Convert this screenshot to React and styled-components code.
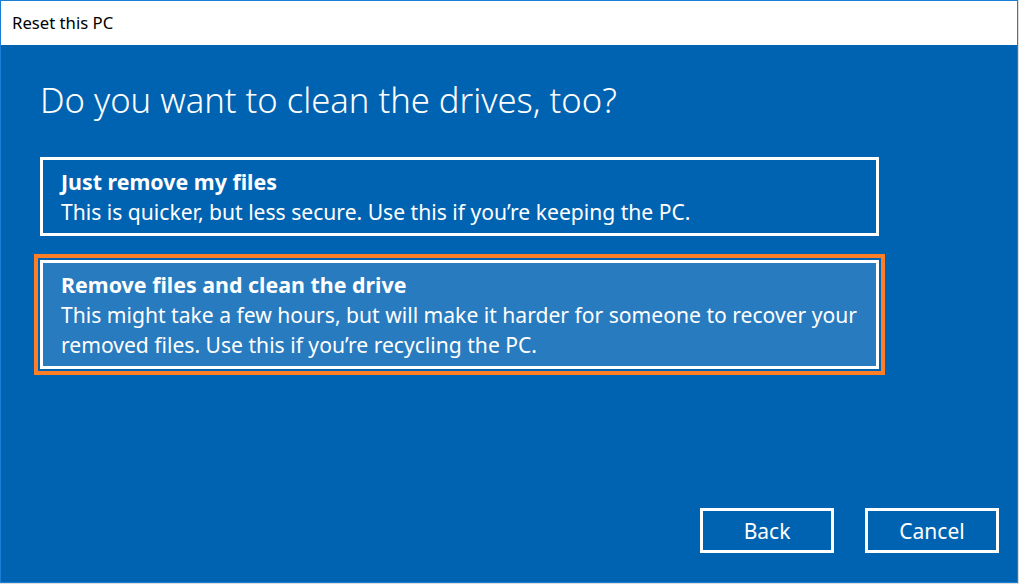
import React from "react";
import styled, { createGlobalStyle } from "styled-components";

const GlobalStyle = createGlobalStyle`
  html, body {
    margin: 0;
    padding: 0;
    background: #dcdcdc;
  }
  * {
    box-sizing: border-box;
  }
`;

const Window = styled.div`
  width: 1018px;
  height: 583px;
  border: 1px solid #1a7fd4;
  background: #0063b1;
  display: flex;
  flex-direction: column;
  font-family: "Segoe UI", "Noto Sans", "Open Sans", sans-serif;
  color: #fff;
`;

const TitleBar = styled.div`
  height: 44px;
  flex-shrink: 0;
  background: #fff;
  color: #000;
  font-size: 16.7px;
  display: flex;
  align-items: center;
  padding-left: 11px;
  padding-bottom: 1px;
`;

const Body = styled.div`
  flex: 1;
  display: flex;
  flex-direction: column;
  padding: 34px 18px 29px 39px;
`;

const Heading = styled.h1`
  margin: 0 0 36px;
  font-size: 34.6px;
  font-weight: 300;
  line-height: 42px;
`;

const Options = styled.div`
  display: flex;
  flex-direction: column;
  gap: 24px;
  width: 839px;
`;

const Option = styled.div`
  border: 3px solid #fff;
  background: ${(p) => (p.$selected ? "#287bbf" : "transparent")};
  outline: ${(p) => (p.$selected ? "4px solid #ff7f27" : "none")};
  outline-offset: 2px;
  padding: 7px 8px 6px 18px;
  font-size: 21.1px;
  line-height: 30px;
`;

const OptionTitle = styled.div`
  font-weight: 700;
  font-size: 21.4px;
`;

const OptionText = styled.div`
  font-weight: 400;
`;

const Footer = styled.div`
  margin-top: auto;
  display: flex;
  justify-content: flex-end;
  gap: 31px;
`;

const Button = styled.button`
  width: 134px;
  height: 45px;
  border: 3px solid #fff;
  background: transparent;
  color: #fff;
  font-family: inherit;
  font-size: 21px;
  padding: 0;
`;

const App = () => {
  return (
    <>
      <GlobalStyle />
      <Window>
        <TitleBar>Reset this PC</TitleBar>
        <Body>
          <Heading>Do you want to clean the drives, too?</Heading>
          <Options>
            <Option>
              <OptionTitle>Just remove my files</OptionTitle>
              <OptionText>
                This is quicker, but less secure. Use this if you’re keeping the PC.
              </OptionText>
            </Option>
            <Option $selected>
              <OptionTitle>Remove files and clean the drive</OptionTitle>
              <OptionText>
                This might take a few hours, but will make it harder for someone to recover your
                removed files. Use this if you’re recycling the PC.
              </OptionText>
            </Option>
          </Options>
          <Footer>
            <Button>Back</Button>
            <Button>Cancel</Button>
          </Footer>
        </Body>
      </Window>
    </>
  );
};

export default App;
